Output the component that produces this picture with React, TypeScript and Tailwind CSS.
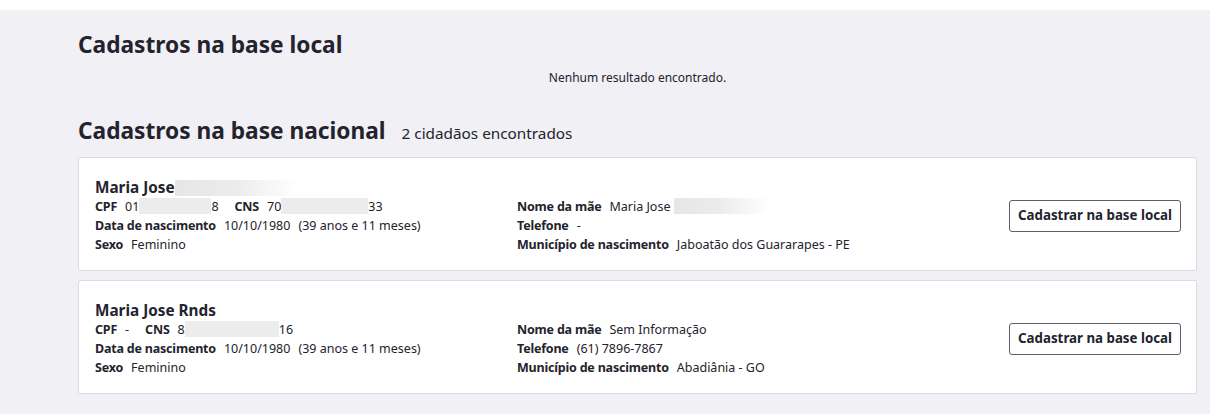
import React from "react";

type Field = { label: string; value: React.ReactNode };

const Redact = ({ w, fade = false }: { w: number; fade?: boolean }) => (
  <span
    className={`inline-block h-[16px] align-[-3px] ${
      fade
        ? "bg-gradient-to-r from-[#e6e6e6] via-[#ececec] to-white"
        : "bg-[#ececec]"
    }`}
    style={{ width: w }}
  />
);

const Row = ({ items }: { items: Field[] }) => (
  <div className="flex gap-4 h-[19px] items-center whitespace-nowrap">
    {items.map((f) => (
      <span key={f.label}>
        <span className="font-bold tracking-[-0.2px]">{f.label}</span>
        <span className="ml-2">{f.value}</span>
      </span>
    ))}
  </div>
);

const people = [
  {
    name: (
      <>
        Maria Jose
        <Redact w={122} fade />
      </>
    ),
    cpf: (
      <>
        01
        <Redact w={72} />8
      </>
    ),
    cns: (
      <>
        70
        <Redact w={87} />
        33
      </>
    ),
    mae: (
      <>
        Maria Jose <Redact w={95} fade />
      </>
    ),
    tel: "-",
    mun: "Jaboatão dos Guararapes - PE",
  },
  {
    name: <>Maria Jose Rnds</>,
    cpf: "-",
    cns: (
      <>
        8<Redact w={94} />
        16
      </>
    ),
    mae: "Sem Informação",
    tel: "(61) 7896-7867",
    mun: "Abadiânia - GO",
  },
];

export default function App() {
  return (
    <div
      className="bg-white pt-[10px] text-[#24232d] min-h-[415px]"
      style={{ fontFamily: "'Noto Sans', 'Open Sans', sans-serif" }}
    >
      <div className="bg-[#f0f0f5] pl-[78px] pr-[13px] pt-[19px] pb-[20px]">
        <h2 className="text-[22.7px] leading-[32px] font-bold">
          Cadastros na base local
        </h2>
        <p className="mt-[9px] text-[12px] leading-[16px] text-center">
          Nenhum resultado encontrado.
        </p>
        <div className="mt-[29px] flex items-baseline gap-4">
          <h2 className="text-[22.7px] leading-[32px] font-bold">
            Cadastros na base nacional
          </h2>
          <span className="text-[15.3px]">2 cidadãos encontrados</span>
        </div>
        <div className="mt-[10px] flex flex-col gap-[9px]">
          {people.map((p, i) => (
            <div
              key={i}
              className="bg-white border border-[#dcdbe3] rounded-[2px] pl-4 pr-[15px] pt-[18px] pb-[15px] flex items-start text-[12.5px]"
            >
              <div className="w-[422px]">
                <div className="text-[15.3px] font-bold h-[22px] leading-[22px] whitespace-nowrap">
                  {p.name}
                </div>
                <Row
                  items={[
                    { label: "CPF", value: p.cpf },
                    { label: "CNS", value: p.cns },
                  ]}
                />
                <Row
                  items={[
                    {
                      label: "Data de nascimento",
                      value: (
                        <>
                          10/10/1980<span className="ml-2">(39 anos e 11 meses)</span>
                        </>
                      ),
                    },
                  ]}
                />
                <Row items={[{ label: "Sexo", value: "Feminino" }]} />
              </div>
              <div className="flex-1 pt-[22px]">
                <Row items={[{ label: "Nome da mãe", value: p.mae }]} />
                <Row items={[{ label: "Telefone", value: p.tel }]} />
                <Row
                  items={[{ label: "Município de nascimento", value: p.mun }]}
                />
              </div>
              <button className="self-center h-[32px] px-[8px] border border-[#5f5c6b] rounded-[3px] text-[13.3px] font-bold bg-white whitespace-nowrap">
                Cadastrar na base local
              </button>
            </div>
          ))}
        </div>
      </div>
    </div>
  );
}
